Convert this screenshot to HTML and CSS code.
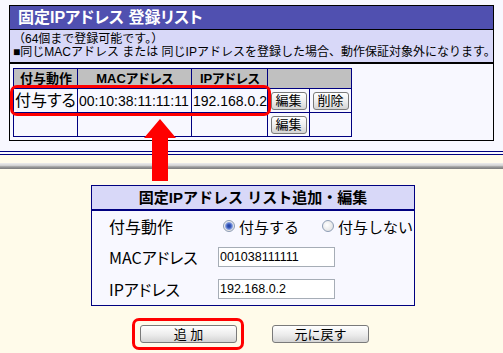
FILE: index.html
```html
<!DOCTYPE html>
<html lang="ja">
<head>
  <meta charset="UTF-8" />
  <title>固定IPアドレス 登録リスト</title>
  <link rel="stylesheet" href="styles.css">
</head>
<body>
  <div class="page">
    <div class="upper">
      <div class="list-box">
        <div class="list-title">固定IPアドレス 登録リスト</div>
        <div class="list-note">（64個まで登録可能です。）<br>■同じMACアドレス または 同じIPアドレスを登録した場合、動作保証対象外になります。</div>
        <div class="list-body">
          <table class="ip-table">
            <colgroup>
              <col class="c-act"><col class="c-mac"><col class="c-ip"><col class="c-btn"><col class="c-btn">
            </colgroup>
            <tr class="head">
              <th>付与動作</th><th>MACアドレス</th><th>IPアドレス</th><th colspan="2"></th>
            </tr>
            <tr>
              <td class="act">付与する</td><td>00:10:38:11:11:11</td><td>192.168.0.2</td>
              <td class="cell-btn"><button class="btn mini">編集</button></td>
              <td class="cell-btn"><button class="btn mini">削除</button></td>
            </tr>
            <tr>
              <td></td><td></td><td></td>
              <td class="cell-btn"><button class="btn mini">編集</button></td>
              <td></td>
            </tr>
          </table>
        </div>
        <!-- highlight of the selected row -->
        <div class="row-mark"></div>
      </div>
    </div>
    <div class="rule"></div>
    <div class="lower">
      <div class="shade"></div>
      <div class="edit-box">
        <div class="edit-title">固定IPアドレス リスト追加・編集</div>
        <div class="edit-grid">
          <div class="edit-label">付与動作</div>
          <div class="edit-value">
            <label class="radio first"><span class="dot on"></span>付与する</label>
            <label class="radio second"><span class="dot"></span>付与しない</label>
          </div>
          <div class="edit-label">MACアドレス</div>
          <div class="edit-value"><input class="field" type="text" value="001038111111"></div>
          <div class="edit-label">IPアドレス</div>
          <div class="edit-value"><input class="field" type="text" value="192.168.0.2"></div>
        </div>
      </div>
      <div class="actions">
        <span class="mark"><button class="btn big">追 加</button></span>
        <button class="btn big back">元に戻す</button>
      </div>
    </div>
    <svg class="arrow" width="32" height="62" viewBox="0 0 32 62">
      <polygon points="16,0 32,19 24,19 24,62 8,62 8,19 0,19" fill="#ff0000"/>
    </svg>
  </div>
</body>
</html>
```

FILE: styles.css
```css
* {
  box-sizing: border-box;
}
body {
  margin: 0;
  background: #fffbea;
  color: #000;
  font-family: "Liberation Sans", "Noto Sans CJK JP", sans-serif;
}
.page {
  position: relative;
  width: 503px;
  height: 353px;
  overflow: hidden;
}
.upper {
  background: #f8f8ff;
  padding: 5px 9px 10px;
}
.list-box {
  position: relative;
  border: 1px solid #000;
}
.list-title {
  height: 24px;
  padding-left: 8px;
  background: #5050b0;
  border-bottom: 1px solid #000;
  color: #fff;
  font-size: 16px;
  font-weight: bold;
  line-height: 23px;
  font-feature-settings: "palt";
}
.list-note {
  height: 34px;
  padding: 3px 3px;
  background: #d8d8f8;
  border-bottom: 2px solid #000;
  font-size: 12px;
  line-height: 13px;
  white-space: nowrap;
}
.list-body {
  padding: 4px 3px 3px;
}
.ip-table {
  border-collapse: collapse;
  table-layout: fixed;
  width: 339px;
  border: 1px solid #000080;
  font-feature-settings: "palt";
}
.c-act { width: 64px; }
.c-mac { width: 114px; }
.c-ip { width: 76px; }
.c-btn { width: 42px; }
.ip-table th,
.ip-table td {
  border: 1px solid #000080;
  padding: 0 0 0 1px;
  white-space: nowrap;
  overflow: hidden;
}
.ip-table tr {
  height: 24px;
}
.ip-table tr.head {
  height: 20px;
}
.ip-table th {
  background: #c0c0c0;
  font-size: 13px;
  font-weight: bold;
  line-height: 16px;
}
.ip-table td {
  font-size: 14px;
  line-height: 20px;
}
.ip-table td.act {
  font-size: 16px;
}
.ip-table td.cell-btn {
  padding: 0;
  text-align: center;
}
.btn {
  padding: 0;
  border: 1px solid #7a7a7a;
  border-radius: 3px;
  background: linear-gradient(#ffffff, #ececec 55%, #d4d4d4);
  color: #000;
  font-family: "Liberation Sans", "Noto Sans CJK JP", sans-serif;
  font-size: 13px;
  line-height: 15px;
}
.mini {
  width: 36px;
  height: 18px;
  display: block;
  margin: 0 auto;
}
.row-mark {
  position: absolute;
  left: 0;
  top: 79px;
  width: 261px;
  height: 31px;
  border: 3px solid #ff0000;
  border-radius: 7px;
}
.rule {
  height: 4px;
  background: #f8f8ff;
  border-top: 1px solid #000080;
  border-bottom: 1px solid #000080;
}
.lower {
  padding-top: 8px;
}
.shade {
  height: 6px;
  background: linear-gradient(#ececec, #d4d4d4 40%, #9a9a9a 65%, #7c7c7c);
}
.edit-box {
  width: 324px;
  margin: 16px 0 0 91px;
  background: #f8f8ff;
  border: 1px solid #000080;
}
.edit-title {
  height: 25px;
  background: #d8d8f8;
  border-bottom: 2px solid #000080;
  font-size: 15px;
  font-weight: bold;
  line-height: 23px;
  text-align: center;
}
.edit-grid {
  display: grid;
  grid-template-columns: 126px 1fr;
  grid-template-rows: 30px 32px 32px;
  align-items: center;
}
.edit-label {
  padding-left: 17px;
  font-family: "Noto Sans CJK JP", sans-serif;
  font-size: 16px;
  font-feature-settings: "palt";
}
.edit-value {
  display: flex;
  align-items: center;
}
.radio {
  display: inline-flex;
  align-items: center;
  font-size: 15px;
}
.radio.first {
  margin-left: 5px;
}
.radio.second {
  margin-left: 23px;
}
.dot {
  width: 12px;
  height: 12px;
  margin-right: 4px;
  border: 1px solid #8c9cb4;
  border-radius: 50%;
  background: radial-gradient(circle at 40% 40%, #ffffff, #dadada);
}
.dot.on {
  background: radial-gradient(circle, #1e3c96 0, #3a5cc0 2px, #8aa2e0 3.5px, transparent 4.5px),
    radial-gradient(circle at 40% 40%, #ffffff, #dadada);
}
.field {
  width: 117px;
  height: 20px;
  padding: 0 1px;
  border: 1px solid #a6adb6;
  background: #fff;
  font-family: "Liberation Sans", sans-serif;
  font-size: 12.5px;
}
.actions {
  display: flex;
  align-items: center;
  margin: 12px 0 0 132px;
}
.mark {
  display: block;
  padding: 4px 4px 4px 5px;
  border: 3px solid #ff0000;
  border-radius: 7px;
}
.big {
  display: block;
  width: 97px;
  height: 18px;
}
.back {
  margin-left: 28px;
}
.arrow {
  position: absolute;
  left: 144px;
  top: 119px;
}
```
